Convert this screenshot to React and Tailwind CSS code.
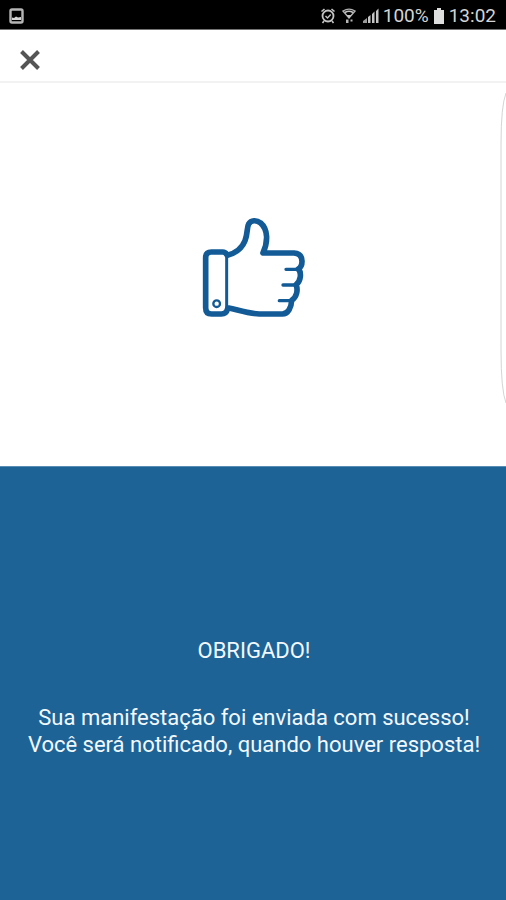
// Confirmation screen shown after a message has been sent

function ImageIcon() {
  return (
    <svg viewBox="0 0 16 16" className="h-4 w-4" fill="none" aria-hidden="true">
      <rect x="2.500" y="1.500" width="12" height="13" rx="1.500" stroke="#b5b5b5" strokeWidth="2.400" />
      <path d="M4 12V9.500l2 .5 2-1.500 2 1 3-.5v3z" fill="#d6d6d6" />
    </svg>
  );
}

function AlarmIcon() {
  return (
    <svg viewBox="0 0 16 18" className="h-[18px] w-4" fill="none" stroke="#c4c4c4" aria-hidden="true">
      <circle cx="8" cy="9" r="5.500" strokeWidth="1.800" />
      <path d="M1.500 4.500 4.500 2M14.500 4.500 11.500 2M4 14l-1.500 2M12 14l1.500 2" strokeWidth="1.600" />
      <path d="m5.500 9 2 2 3.200-3.500" strokeWidth="1.400" />
    </svg>
  );
}

function WifiIcon() {
  return (
    <svg viewBox="0 0 14 18" className="h-[18px] w-3.5" fill="none" aria-hidden="true">
      <path d="M1 4C4.500 1.800 9.500 1.800 13 4L7 11z" stroke="#b0b0b0" strokeWidth="1.400" />
      <path d="M3 5.500c2.500-1.500 5.500-1.500 8 0" stroke="#c4c4c4" strokeWidth="1.600" />
      <path d="M4.500 8h5L7 11.500z" fill="#c4c4c4" />
      <path d="M4 12.500h2.500v3.500H4zM8.500 12.500h2v2h-2z" fill="#b5b5b5" />
    </svg>
  );
}

function SignalIcon() {
  return (
    <svg viewBox="0 0 17 16" className="h-4 w-[17px]" aria-hidden="true">
      <path d="M1 15v-2l4-3v5z" fill="#9a9a9a" />
      <path d="M6 15V9l2.500-2v8zM10 15V6l2.500-2.500V15zM14 15V3l2.500-2.500V15z" fill="#c4c4c4" />
    </svg>
  );
}

function BatteryIcon() {
  return (
    <svg viewBox="0 0 12 16" className="h-4 w-3" aria-hidden="true">
      <path d="M4 0h4v2h3v14H1V2h3z" fill="#dedede" />
    </svg>
  );
}

function ThumbsUpIcon() {
  return (
    <svg
      viewBox="36 36 312 306"
      className="h-[102px] w-[104px]"
      fill="none"
      stroke="#125b96"
      strokeWidth="17"
      strokeLinecap="round"
      strokeLinejoin="round"
      role="img"
      aria-label="Positivo"
    >
      {/* cuff */}
      <path d="M110 148Q106 141 98 141H64Q47 141 47 158V308Q47 327 65 327H94Q109 327 113 311" />
      <path d="M110 148V312" strokeWidth="9" />
      <circle cx="80" cy="296" r="10" strokeWidth="7" />
      {/* hand */}
      <path d="M112 151C141 143 158 125 165 107C174 84 170 67 176 57C183 45 199 44 212 54C235 74 234 111 219 144H312Q336 146 336 169Q336 186 325 192C335 203 333 228 318 239C325 256 320 276 305 286C304 307 295 327 277 327H208C170 325 145 315 116 309" />
      <path d="M288 193H327M279 240H319M268 287H306" strokeWidth="10" />
    </svg>
  );
}

function StatusBar() {
  return (
    <div className="flex h-[30px] shrink-0 items-center justify-between border-b border-neutral-500 bg-black pt-0.5 pr-2.5 pl-2 text-[19px] leading-6 text-[#d4d4d4]">
      <ImageIcon />
      <div className="flex items-center gap-1">
        <span className="flex items-center gap-1.5">
          <AlarmIcon />
          <WifiIcon />
          <SignalIcon />
        </span>
        <span>100%</span>
        <BatteryIcon />
        <span>13:02</span>
      </div>
    </div>
  );
}

function App() {
  return (
    <div className="relative flex min-h-screen flex-col overflow-hidden bg-white font-['Roboto',sans-serif]">
      <StatusBar />

      <header className="flex h-[53px] shrink-0 items-center border-b-2 border-[#f2f2f2] pt-2 pl-5">
        <button type="button" aria-label="Fechar" className="flex h-5 w-5 items-center justify-center">
          <svg viewBox="0 0 20 20" className="h-5 w-5" fill="none" aria-hidden="true">
            <path d="M1.500 1.500 18.500 18.500M18.500 1.500 1.500 18.500" stroke="#555" strokeWidth="4" />
          </svg>
        </button>
      </header>

      <main className="grid grow grid-rows-[15fr_17fr]">
        <section className="flex items-center justify-center pb-3 pl-0.5">
          <ThumbsUpIcon />
        </section>

        <section className="flex flex-col items-center justify-center border-t border-[#5a8db3] bg-[#1d6396] pt-7 pl-0.5 text-center text-[22px] leading-[27px] text-[#f2f8ff]">
          <h1>OBRIGADO!</h1>
          <p className="pt-10">
            Sua manifestação foi enviada com sucesso!
            <br />
            Você será notificado, quando houver resposta!
          </p>
        </section>
      </main>

      {/* edge panel handle, drawn over the screen */}
      <svg
        viewBox="0 0 6 312"
        className="absolute top-[92px] right-0 h-[312px] w-1.5"
        fill="none"
        aria-hidden="true"
      >
        <path d="M6 1Q1 14 1 52V258Q1 298 6 311" stroke="#d4d4d4" />
      </svg>
    </div>
  );
}

export default App;
